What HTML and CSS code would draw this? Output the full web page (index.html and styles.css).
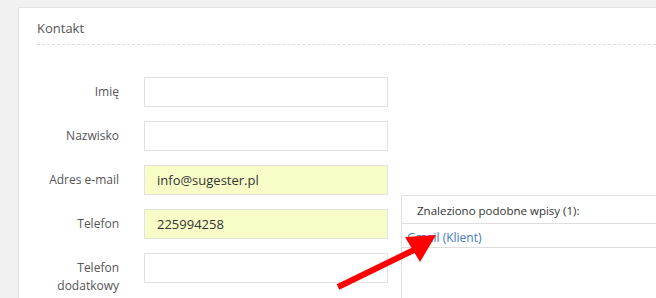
FILE: index.html
```html
<!DOCTYPE html>
<html lang="pl">
<head>
  <meta charset="UTF-8" />
  <title>Kontakt</title>
  <link rel="stylesheet" href="styles.css">
</head>
<body>
  <div class="panel">
    <div class="panel-head">Kontakt</div>

    <form class="form">
      <div class="row">
        <label>Imię</label>
        <input type="text" value="">
      </div>
      <div class="row">
        <label>Nazwisko</label>
        <input type="text" value="">
      </div>
      <div class="row">
        <label>Adres e-mail</label>
        <input type="text" class="filled" value="info@sugester.pl">
      </div>
      <div class="row">
        <label>Telefon</label>
        <input type="text" class="filled" value="225994258">
      </div>
      <div class="row">
        <label>Telefon<br>dodatkowy</label>
        <input type="text" value="">
      </div>
    </form>
  </div>

  <div class="similar">
    <div class="similar-head">Znaleziono podobne wpisy (1):</div>
    <a class="similar-item" href="#">Gmail (Klient)</a>
  </div>

  <svg class="arrow" width="656" height="298" viewBox="0 0 656 298">
    <line x1="338" y1="287" x2="418" y2="248" stroke="#ff0000" stroke-width="6"/>
    <polygon points="436,235 405,237 420,262" fill="#ff0000"/>
  </svg>
</body>
</html>
```

FILE: styles.css
```css
body {
  margin: 0;
  background: #f1f1f1;
  font-family: "Open Sans", Arial, sans-serif;
  overflow: hidden;
  height: 298px;
}
.panel {
  margin: 7px 0 0 18px;
  background: #fff;
  border: 1px solid #e3e3e3;
  border-right: none;
  height: 300px;
}
.panel-head {
  margin-left: 18px;
  padding: 12px 0 8px 0;
  font-size: 13px;
  color: #555;
  border-bottom: 1px dashed #dcdcdc;
  line-height: 16px;
}
.form {
  padding-top: 32px;
}
.row {
  display: flex;
  align-items: flex-start;
  margin-bottom: 14px;
}
.row label {
  width: 100px;
  text-align: right;
  font-size: 12px;
  color: #555;
  line-height: 18px;
  padding-top: 6px;
  margin-right: 25px;
}
.row input {
  width: 244px;
  height: 30px;
  box-sizing: border-box;
  border: 1px solid #e2e2e2;
  background: #fff;
  padding: 0 12px;
  font-family: "Open Sans", Arial, sans-serif;
  font-size: 13px;
  color: #333;
  margin: 0;
}
.row input.filled {
  background: #f8fdc8;
}
.similar {
  position: absolute;
  left: 401px;
  top: 195px;
  right: 0;
  bottom: 0;
  background: #fff;
  border-left: 1px solid #e2e2e2;
  border-top: 1px solid #e2e2e2;
  font-size: 11.5px;
}
.similar-head {
  padding: 7px 0 0 15px;
  height: 20px;
  color: #333;
  border-bottom: 1px solid #dedede;
}
.similar-item {
  display: block;
  padding: 5px 0 0 5px;
  height: 18px;
  font-size: 12px;
  color: #3f7bc4;
  text-decoration: none;
  border-bottom: 1px solid #dedede;
}
.arrow {
  position: absolute;
  left: 0;
  top: 0;
}
```
